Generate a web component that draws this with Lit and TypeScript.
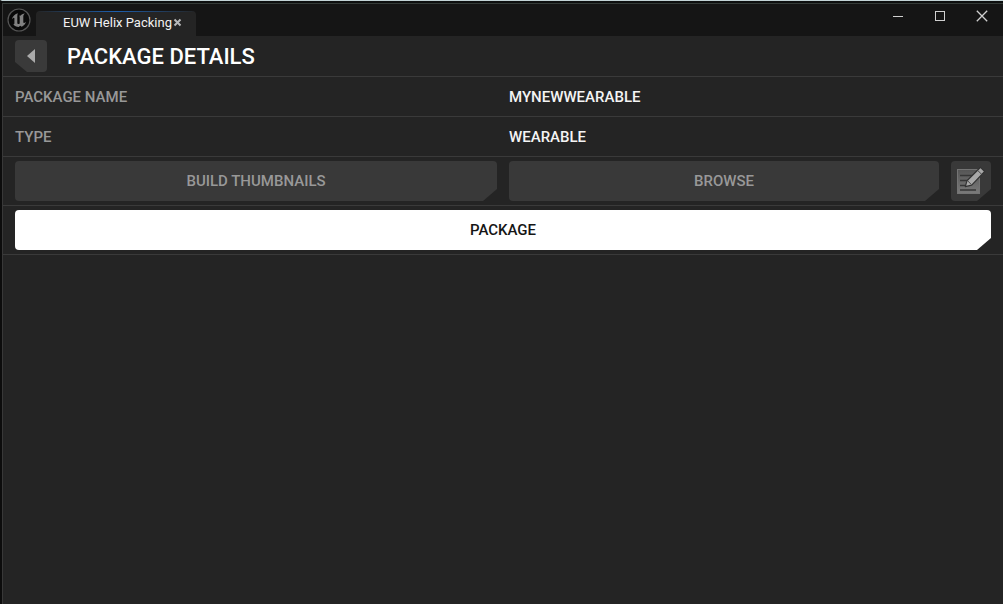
import { LitElement, html, css } from "lit";
import { customElement, property } from "lit/decorators.js";

@customElement("detail-row")
class DetailRow extends LitElement {
  @property() label = "";
  @property() value = "";

  static styles = css`
    :host {
      display: block;
      border-bottom: 1px solid #3a3a3a;
    }
    .row {
      display: grid;
      grid-template-columns: 1fr 1fr;
      column-gap: 12px;
      align-items: center;
      height: 39px;
      margin: 0;
      padding: 0 12px;
      font-size: 15px;
      font-weight: 500;
      line-height: 20px;
    }
    .label {
      color: #989898;
    }
    .value {
      margin: 0;
      color: #f4f4f4;
    }
  `;

  render() {
    return html`<dl class="row">
      <dt class="label">${this.label}</dt>
      <dd class="value">${this.value}</dd>
    </dl>`;
  }
}

@customElement("app-root")
class AppRoot extends LitElement {
  static styles = css`
    :host {
      display: block;
      font-family: Roboto, "Liberation Sans", sans-serif;
    }
    * {
      box-sizing: border-box;
    }
    button {
      border: 0;
      padding: 0;
      background: none;
      color: inherit;
      font: inherit;
      display: flex;
      align-items: center;
      justify-content: center;
    }
    .window {
      display: flex;
      flex-direction: column;
      min-height: 100vh;
      background: #242424;
      border-top: 1px solid #c3d3d6;
      border-left: 2px solid #0c0c0c;
    }
    .frame {
      flex: 1;
      border-top: 1px solid #343a37;
      border-left: 1px solid #383838;
      margin-top: 2px;
      box-shadow: 0 -2px 0 #0d0f0f;
    }
    .titlebar {
      display: flex;
      align-items: flex-end;
      height: 32px;
      background: #151515;
    }
    .logo {
      width: 24px;
      height: 24px;
      margin: 0 5px 4px 4px;
    }
    .tab {
      display: flex;
      align-items: center;
      gap: 1px;
      width: 160px;
      height: 25px;
      padding: 0 12px 2px 27px;
      border-radius: 4px 4px 0 0;
      background:
        linear-gradient(90deg, transparent, #1d5fae 50%, transparent) top / 100% 1px no-repeat,
        #242424;
      color: #f2f2f2;
      font-size: 13px;
      line-height: 16px;
      white-space: nowrap;
    }
    .controls {
      display: flex;
      margin-left: auto;
      align-self: flex-start;
    }
    .control {
      width: 42px;
      height: 24px;
    }
    .header {
      display: flex;
      align-items: center;
      gap: 20px;
      height: 41px;
      padding: 0 12px;
      border-bottom: 1px solid #3a3a3a;
    }
    .back {
      width: 32px;
      height: 32px;
      border-radius: 4px;
      background: #3a3a3a;
      clip-path: polygon(0 0, 100% 0, 100% 100%, 12px 100%, 0 22px);
    }
    h1 {
      margin: 0;
      padding-top: 2px;
      color: #fff;
      font-size: 22px;
      font-weight: 500;
      line-height: 28px;
    }
    .actions {
      display: grid;
      grid-template-columns: 1fr 1fr;
      gap: 12px;
      padding: 4px 12px;
      border-bottom: 1px solid #3a3a3a;
    }
    .single {
      grid-template-columns: 1fr;
    }
    .pair {
      display: grid;
      grid-template-columns: 1fr 40px;
      gap: 12px;
    }
    .action {
      height: 40px;
      border-radius: 4px;
      background: #393939;
      color: #989898;
      font-size: 15px;
      font-weight: 500;
      line-height: 20px;
      clip-path: polygon(0 0, 100% 0, 100% 28px, calc(100% - 14px) 100%, 0 100%);
    }
    .primary {
      background: #fff;
      color: #151515;
    }
  `;

  render() {
    return html`
      <div class="window">
        <div class="frame">
          <header class="titlebar">
            <svg class="logo" viewBox="0 0 24 24" aria-hidden="true">
              <circle cx="12" cy="12" r="11" fill="#090909" stroke="#555" stroke-width="1.2" />
              <path
                fill="#808080"
                d="M11 5.2C8 6 5.5 8.2 4.8 11.5c.8-1.1 1.5-1.7 2.1-1.7.4 0 .5.3.5.8v4.7c0 .7-.4.9-1 .9 1.1 1.7 3 2.6 5.3 2.9l1.5-1.4 1.6 1c2-1.1 3.6-2.7 4.3-5-1 .9-1.8 1.3-2.3 1.2-.4-.1-.5-.4-.5-.9V8.3c0-1.2.8-2.2 1.6-2.9-1.8.3-3.6 1-4.9 2.5-.3-.2-.6-.3-1-.3.5.5.7.9.7 1.7v6.1c-.5.5-1 .7-1.5.7-.6 0-.9-.4-.9-1.1V8.400c0-1.500.3-2.500.7-3.200z"
              />
            </svg>
            <div class="tab">
              <span>EUW Helix Packing</span>
              <button aria-label="Close tab">
                <svg width="9" height="9" viewBox="0 0 9 9">
                  <path d="M1.500 1.500l6 6m0-6l-6 6" stroke="#b8b8b8" stroke-width="2" />
                </svg>
              </button>
            </div>
            <div class="controls">
              <button class="control" aria-label="Minimize">
                <svg width="12" height="12" viewBox="0 0 12 12">
                  <path d="M1 6.500h10" stroke="#d0d0d0" />
                </svg>
              </button>
              <button class="control" aria-label="Maximize">
                <svg width="12" height="12" viewBox="0 0 12 12">
                  <rect x="1.500" y="1.500" width="9" height="9" fill="none" stroke="#d0d0d0" />
                </svg>
              </button>
              <button class="control" aria-label="Close">
                <svg width="12" height="12" viewBox="0 0 12 12">
                  <path d="M.8.8l10.400 10.400m0-10.400L.8 11.200" stroke="#d0d0d0" stroke-width="1.300" />
                </svg>
              </button>
            </div>
          </header>
          <main>
            <div class="header">
              <button class="back" aria-label="Back">
                <svg width="10" height="14" viewBox="0 0 10 14">
                  <path d="M9 0v14L1 7z" fill="#ababab" />
                </svg>
              </button>
              <h1>PACKAGE DETAILS</h1>
            </div>
            <detail-row label="PACKAGE NAME" value="MYNEWWEARABLE"></detail-row>
            <detail-row label="TYPE" value="WEARABLE"></detail-row>
            <div class="actions">
              <button class="action">BUILD THUMBNAILS</button>
              <div class="pair">
                <button class="action">BROWSE</button>
                <button class="action" aria-label="Edit">
                  <svg width="30" height="30" viewBox="0 0 30 30">
                    <defs>
                      <linearGradient id="sheet" x1="0" y1="0" x2="0" y2="1">
                        <stop offset="0" stop-color="#555" />
                        <stop offset="1" stop-color="#7a7a7a" />
                      </linearGradient>
                    </defs>
                    <rect x="1.500" y="3.500" width="22" height="24" fill="url(#sheet)" stroke="#747474" />
                    <path d="M4 9.500h14M4 14.500h10M4 19.500h6M4 24h16" stroke="#363636" stroke-width="1.500" />
                    <path
                      d="M24.500 1.300l4.200 4.200-13 13.700-6.400 1.500 1.700-6z"
                      fill="#a8a8a8"
                      stroke="#333"
                      stroke-width="1.200"
                      stroke-linejoin="round"
                    />
                    <path d="M21.700 4.400l4.200 4.200M11.500 14.700l4 4" stroke="#484848" />
                  </svg>
                </button>
              </div>
            </div>
            <div class="actions single">
              <button class="action primary">PACKAGE</button>
            </div>
          </main>
        </div>
      </div>
    `;
  }
}
